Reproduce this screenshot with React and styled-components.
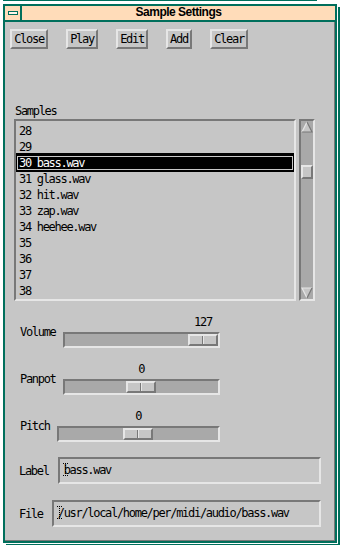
import React from 'react';
import styled, { createGlobalStyle, css } from 'styled-components';

const teal = '#006f5c';
const peach = '#ffdcb9';
const face = '#c6c6c6';
const light = '#e6e6e6';
const dark = '#787878';
const troughGray = '#a9a9a9';
const mono = `"DejaVu Sans Mono", "Liberation Mono", monospace`;

const GlobalStyle = createGlobalStyle`
  html, body { margin: 0; padding: 0; background: #fff; }
  body { width: 340px; height: 545px; overflow: hidden; }
  * { box-sizing: border-box; }
`;

const samples = [
  '28', '29', '30 bass.wav', '31 glass.wav', '32 hit.wav', '33 zap.wav',
  '34 heehee.wav', '35', '36', '37', '38',
];

const scales = [
  { label: 'Volume', value: 127, min: 0, max: 127 },
  { label: 'Panpot', value: 0, min: -64, max: 64 },
  { label: 'Pitch', value: 0, min: -64, max: 64 },
];

const buttons = [
  { text: 'Close', w: 38 },
  { text: 'Play', w: 32 },
  { text: 'Edit', w: 32 },
  { text: 'Add', w: 26 },
  { text: 'Clear', w: 38 },
];

const inset = css`
  border: 2px solid;
  border-color: ${dark} ${light} ${light} ${dark};
`;

const raised = css`
  border: 2px solid;
  border-color: ${light} ${dark} ${dark} ${light};
`;

const ResizeEdge = styled.div`
  width: 314px;
  height: 1px;
  margin-left: 3px;
  background: ${teal};
`;

const Window = styled.div`
  width: 334px;
  height: 539px;
  margin: 3px 0 0 3px;
  border: 2px solid ${teal};
  box-shadow: 1px 1px 0 0 #fff, 3px 3px 0 0 ${teal};
  display: flex;
  flex-direction: column;
`;

const TitleBar = styled.div`
  display: flex;
  height: 16px;
  background: ${peach};
  border-bottom: 2px solid ${teal};
`;

const MenuButton = styled.div`
  width: 17px;
  border-right: 2px solid ${teal};
  display: flex;
  align-items: center;
  justify-content: center;
`;

const MenuGlyph = styled.span`
  width: 10px;
  height: 4px;
  border: 1px solid ${teal};
  background: #fff4ea;
`;

const Title = styled.div`
  flex: 1;
  text-align: center;
  font: bold 12px/13px "Liberation Sans", Arial, sans-serif;
  letter-spacing: -0.5px;
  color: #000;
`;

const Client = styled.div`
  flex: 1;
  background: ${face};
  border-right: 1px solid ${dark};
  border-bottom: 1px solid ${dark};
  padding-top: 7px;
  font-family: ${mono};
  font-size: 12px;
  letter-spacing: -1.3px;
  color: #000;
`;

const Toolbar = styled.div`
  display: flex;
  gap: 18px;
  margin-left: 5px;
`;

const PushButton = styled.button`
  width: ${(p) => p.$w}px;
  height: 20px;
  padding: 0;
  ${raised};
  background: ${face};
  font: inherit;
  letter-spacing: inherit;
  line-height: 16px;
  color: #000;
  text-align: center;
`;

const SectionLabel = styled.div`
  margin: 56px 0 0 10px;
  line-height: 12px;
`;

const ListArea = styled.div`
  display: flex;
  gap: 3px;
  margin: 2px 0 0 9px;
`;

const List = styled.div`
  width: 282px;
  height: 182px;
  ${inset};
  padding-top: 2px;
  overflow: hidden;
`;

const Item = styled.div`
  height: 16px;
  line-height: 16px;
  padding-left: 3px;
  white-space: pre;
  ${(p) =>
    p.$selected &&
    css`
      background: #000;
      color: #fff;
      box-shadow: inset 0 0 0 1px #000, inset 0 0 0 2px #c8c8c8,
        0 -2px 0 0 #000, 0 1px 0 0 #000;
    `}
`;

const Scrollbar = styled.div`
  width: 16px;
  height: 182px;
  ${inset};
  background: ${troughGray};
  display: flex;
  flex-direction: column;
`;

const Track = styled.div`
  flex: 1;
`;

const ScrollThumb = styled.div`
  margin-top: 32px;
  height: 14px;
  ${raised};
  background: ${face};
`;

const ArrowSvg = styled.svg`
  display: block;
  flex: none;
`;

const ScaleRow = styled.div`
  display: flex;
  align-items: flex-end;
  width: 200px;
  margin: 16px 0 0 15px;
`;

const ScaleLabel = styled.div`
  margin: 0 7px 10px 0;
  line-height: 12px;
`;

const Scale = styled.div`
  flex: 1;
  display: flex;
  flex-direction: column;
`;

const ValueLine = styled.div`
  position: relative;
  height: 15px;
`;

const Value = styled.span`
  position: absolute;
  top: 0;
  line-height: 11px;
  transform: translateX(-50%);
`;

const Trough = styled.div`
  position: relative;
  height: 16px;
  ${inset};
  background: ${troughGray};
`;

const Thumb = styled.div`
  position: absolute;
  top: 0;
  width: 30px;
  height: 12px;
  ${raised};
  background: ${face};

  &::after {
    content: '';
    position: absolute;
    top: 0;
    bottom: 0;
    left: 12px;
    width: 1px;
    background: ${dark};
    box-shadow: 1px 0 0 ${light};
  }
`;

const FieldRow = styled.div`
  display: flex;
  align-items: center;
  width: 302px;
  margin: ${(p) => p.$mt}px 0 0 14px;
`;

const FieldLabel = styled.div`
  margin-right: 9px;
  line-height: 12px;
`;

const Field = styled.div`
  flex: 1;
  height: 27px;
  ${inset};
  padding-left: 4px;
  line-height: 23px;
  white-space: nowrap;
  overflow: hidden;
`;

const Caret = styled.svg`
  display: inline-block;
  vertical-align: middle;
  margin: -2px -4px 0 -1px;
`;

const UpArrow = () => (
  <ArrowSvg width="12" height="12" viewBox="0 0 12 12">
    <polygon points="6,1 11,11 1,11" fill={face} />
    <line x1="1" y1="11" x2="6" y2="1" stroke={light} strokeWidth="1.2" />
    <polyline points="6,1 11,11 1,11" fill="none" stroke={dark} strokeWidth="1.2" />
  </ArrowSvg>
);

const DownArrow = () => (
  <ArrowSvg width="12" height="12" viewBox="0 0 12 12">
    <polygon points="1,1 11,1 6,11" fill={face} />
    <polyline points="6,11 1,1 11,1" fill="none" stroke={light} strokeWidth="1.2" />
    <line x1="11" y1="1" x2="6" y2="11" stroke={dark} strokeWidth="1.2" />
  </ArrowSvg>
);

const IBeam = () => (
  <Caret width="5" height="13" viewBox="0 0 5 13" shapeRendering="crispEdges">
    {[0, 2, 4, 6, 8, 10, 12].map((y) => (
      <rect key={y} x="2" y={y} width="1" height="1" fill="#000" />
    ))}
    <rect x="0" y="0" width="1" height="1" fill="#000" />
    <rect x="4" y="0" width="1" height="1" fill="#000" />
    <rect x="0" y="12" width="1" height="1" fill="#000" />
    <rect x="4" y="12" width="1" height="1" fill="#000" />
  </Caret>
);

const SliderRow = ({ label, value, min, max }) => {
  const pct = (value - min) / (max - min);
  return (
    <ScaleRow>
      <ScaleLabel>{label}</ScaleLabel>
      <Scale>
        <ValueLine>
          <Value style={{ left: `calc(${pct} * (100% - 34px) + 17px)` }}>{value}</Value>
        </ValueLine>
        <Trough>
          <Thumb style={{ left: `calc(${pct} * (100% - 30px))` }} />
        </Trough>
      </Scale>
    </ScaleRow>
  );
};

const App = () => (
  <>
    <GlobalStyle />
    <ResizeEdge />
    <Window>
      <TitleBar>
        <MenuButton>
          <MenuGlyph />
        </MenuButton>
        <Title>Sample Settings</Title>
      </TitleBar>
      <Client>
        <Toolbar>
          {buttons.map((b) => (
            <PushButton key={b.text} $w={b.w}>{b.text}</PushButton>
          ))}
        </Toolbar>

        <SectionLabel>Samples</SectionLabel>
        <ListArea>
          <List>
            {samples.map((s, i) => (
              <Item key={s} $selected={i === 2}>{s}</Item>
            ))}
          </List>
          <Scrollbar>
            <UpArrow />
            <Track>
              <ScrollThumb />
            </Track>
            <DownArrow />
          </Scrollbar>
        </ListArea>

        {scales.map((s) => (
          <SliderRow key={s.label} {...s} />
        ))}

        <FieldRow $mt={15}>
          <FieldLabel>Label</FieldLabel>
          <Field>
            <IBeam />bass.wav
          </Field>
        </FieldRow>
        <FieldRow $mt={16}>
          <FieldLabel>File</FieldLabel>
          <Field>
            <IBeam />/usr/local/home/per/midi/audio/bass.wav
          </Field>
        </FieldRow>
      </Client>
    </Window>
  </>
);

export default App;
